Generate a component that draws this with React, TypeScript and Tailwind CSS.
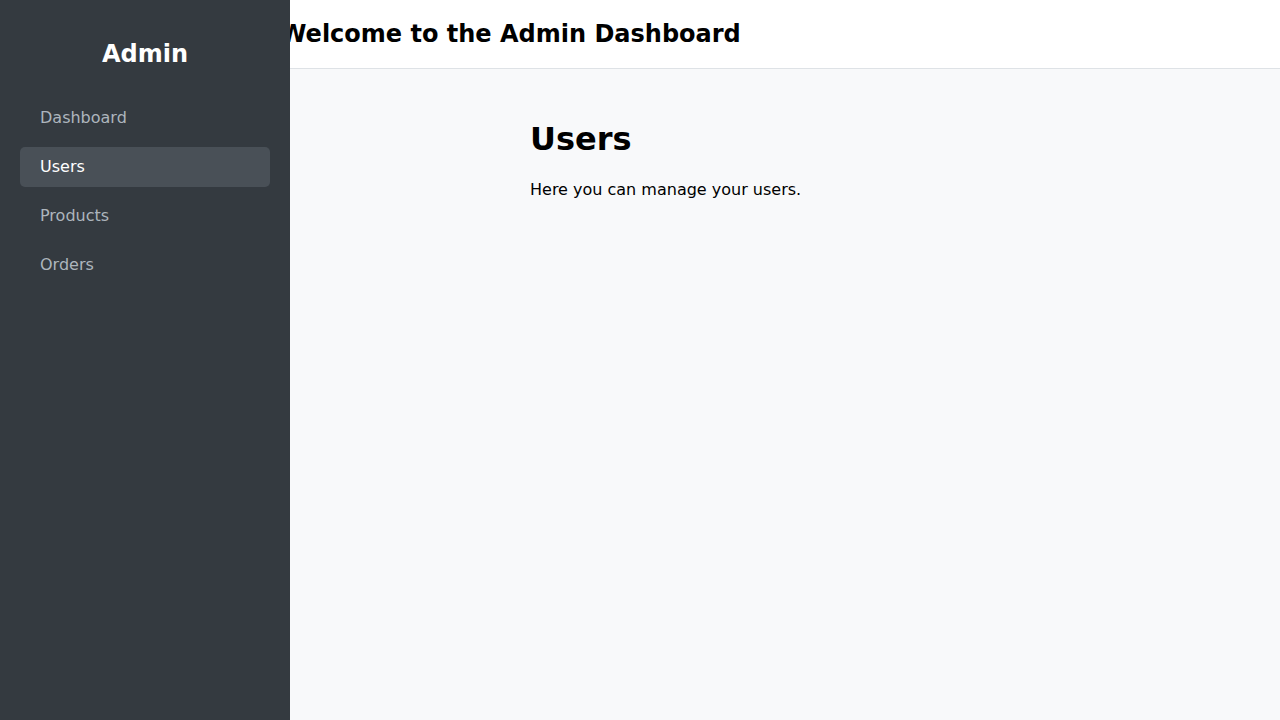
const navItems = ["Dashboard", "Users", "Products", "Orders"];

function Sidebar({ active }: { active: string }) {
  return (
    <aside className="relative z-10 w-[290px] shrink-0 min-h-screen bg-[#343a40] text-white">
      <h1 className="pt-[38px] pb-[28px] text-center text-2xl leading-8 font-bold">Admin</h1>
      <nav className="flex flex-col gap-[9px] px-5">
        {navItems.map((item) => (
          <a
            key={item}
            href="#"
            className={
              item === active
                ? "block rounded-[5px] bg-[#495057] px-5 py-2 leading-6 text-white"
                : "block rounded-[5px] px-5 py-2 leading-6 text-[#adb5bd]"
            }
          >
            {item}
          </a>
        ))}
      </nav>
    </aside>
  );
}

export default function App() {
  return (
    <div className="flex min-h-screen bg-[#f8f9fa] font-['DejaVu_Sans',sans-serif] text-black">
      <Sidebar active="Users" />
      <div className="flex-1 min-w-0">
        <header className="h-[69px] border-b border-[#dee2e6] bg-white flex items-center">
          <h1 className="-ml-[10px] whitespace-nowrap text-2xl font-bold">Welcome to the Admin Dashboard</h1>
        </header>
        <main className="pl-[240px] pt-[50px]">
          <h2 className="text-[32px] leading-10 font-bold">Users</h2>
          <p className="mt-[19px] text-base">Here you can manage your users.</p>
        </main>
      </div>
    </div>
  );
}
